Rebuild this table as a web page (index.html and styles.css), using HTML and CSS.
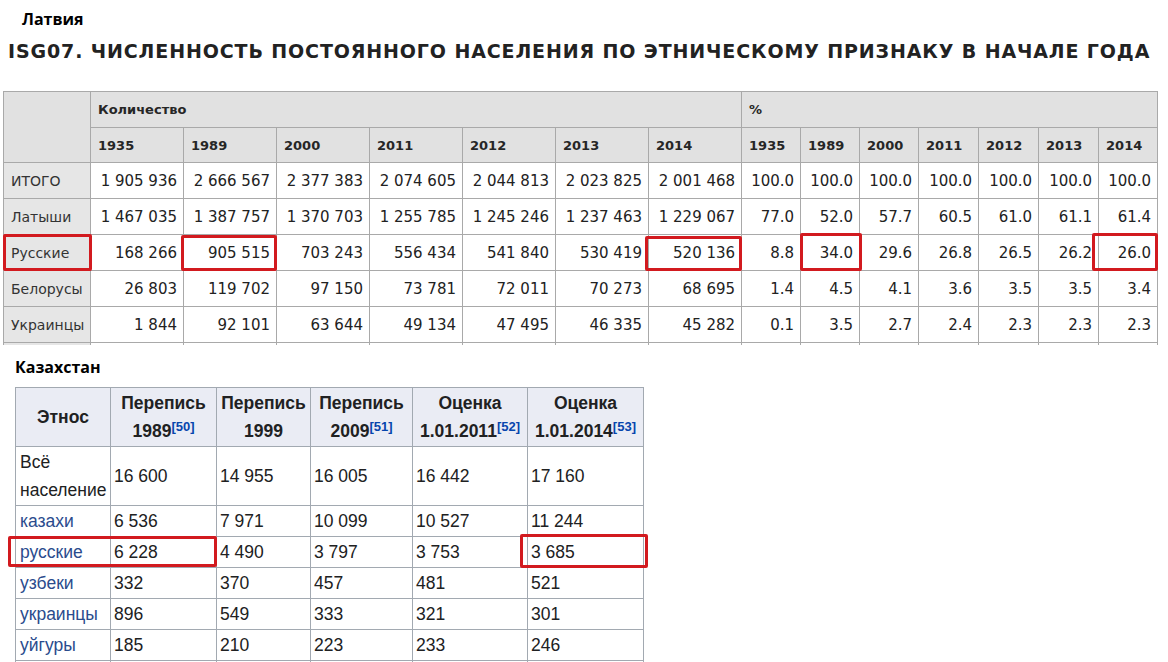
FILE: index.html
```html
<!DOCTYPE html>
<html lang="ru">
<head>
<meta charset="utf-8">
<title>Латвия и Казахстан</title>
<link rel="stylesheet" href="styles.css">
</head>
<body>
<div class="page">
  <p class="label label-lv">Латвия</p>
  <h1 class="title">ISG07. ЧИСЛЕННОСТЬ ПОСТОЯННОГО НАСЕЛЕНИЯ ПО ЭТНИЧЕСКОМУ ПРИЗНАКУ В НАЧАЛЕ ГОДА</h1>
  <div class="lv-wrap">
    <table class="lv">
      <colgroup>
        <col class="c-name">
        <col class="c-num"><col class="c-num"><col class="c-num"><col class="c-num"><col class="c-num"><col class="c-num"><col class="c-num">
        <col class="c-p59"><col class="c-p59"><col class="c-p59"><col class="c-p60"><col class="c-p60"><col class="c-p60"><col class="c-p59">
      </colgroup>
      <thead>
        <tr class="r1">
          <th class="corner" rowspan="2"></th>
          <th class="grp" colspan="7">Количество</th>
          <th class="grp" colspan="7">%</th>
        </tr>
        <tr class="r2">
          <th>1935</th><th>1989</th><th>2000</th><th>2011</th><th>2012</th><th>2013</th><th>2014</th>
          <th>1935</th><th>1989</th><th>2000</th><th>2011</th><th>2012</th><th>2013</th><th>2014</th>
        </tr>
      </thead>
      <tbody>
        <tr><th class="rh">ИТОГО</th><td>1 905 936</td><td>2 666 567</td><td>2 377 383</td><td>2 074 605</td><td>2 044 813</td><td>2 023 825</td><td>2 001 468</td><td>100.0</td><td>100.0</td><td>100.0</td><td>100.0</td><td>100.0</td><td>100.0</td><td>100.0</td></tr>
        <tr><th class="rh">Латыши</th><td>1 467 035</td><td>1 387 757</td><td>1 370 703</td><td>1 255 785</td><td>1 245 246</td><td>1 237 463</td><td>1 229 067</td><td>77.0</td><td>52.0</td><td>57.7</td><td>60.5</td><td>61.0</td><td>61.1</td><td>61.4</td></tr>
        <tr><th class="rh">Русские</th><td>168 266</td><td>905 515</td><td>703 243</td><td>556 434</td><td>541 840</td><td>530 419</td><td>520 136</td><td>8.8</td><td>34.0</td><td>29.6</td><td>26.8</td><td>26.5</td><td>26.2</td><td>26.0</td></tr>
        <tr><th class="rh">Белорусы</th><td>26 803</td><td>119 702</td><td>97 150</td><td>73 781</td><td>72 011</td><td>70 273</td><td>68 695</td><td>1.4</td><td>4.5</td><td>4.1</td><td>3.6</td><td>3.5</td><td>3.5</td><td>3.4</td></tr>
        <tr><th class="rh">Украинцы</th><td>1 844</td><td>92 101</td><td>63 644</td><td>49 134</td><td>47 495</td><td>46 335</td><td>45 282</td><td>0.1</td><td>3.5</td><td>2.7</td><td>2.4</td><td>2.3</td><td>2.3</td><td>2.3</td></tr>
        <tr class="cut"><th class="rh"></th><td></td><td></td><td></td><td></td><td></td><td></td><td></td><td></td><td></td><td></td><td></td><td></td><td></td><td></td></tr>
      </tbody>
    </table>
  </div>

  <p class="label label-kz">Казахстан</p>
  <table class="kz">
    <colgroup>
      <col class="k1"><col class="k2"><col class="k3"><col class="k4"><col class="k5"><col class="k6">
    </colgroup>
    <thead>
      <tr>
        <th>Этнос</th>
        <th>Перепись<br>1989<sup class="ref">[50]</sup></th>
        <th>Перепись<br>1999</th>
        <th>Перепись<br>2009<sup class="ref">[51]</sup></th>
        <th>Оценка<br>1.01.2011<sup class="ref">[52]</sup></th>
        <th>Оценка<br>1.01.2014<sup class="ref">[53]</sup></th>
      </tr>
    </thead>
    <tbody>
      <tr class="two"><td>Всё население</td><td>16 600</td><td>14 955</td><td>16 005</td><td>16 442</td><td>17 160</td></tr>
      <tr><td><a class="lnk" href="#">казахи</a></td><td>6 536</td><td>7 971</td><td>10 099</td><td>10 527</td><td>11 244</td></tr>
      <tr><td><a class="lnk" href="#">русские</a></td><td>6 228</td><td>4 490</td><td>3 797</td><td>3 753</td><td>3 685</td></tr>
      <tr><td><a class="lnk" href="#">узбеки</a></td><td>332</td><td>370</td><td>457</td><td>481</td><td>521</td></tr>
      <tr><td><a class="lnk" href="#">украинцы</a></td><td>896</td><td>549</td><td>333</td><td>321</td><td>301</td></tr>
      <tr><td><a class="lnk" href="#">уйгуры</a></td><td>185</td><td>210</td><td>223</td><td>233</td><td>246</td></tr>
      <tr class="cut"><td></td><td></td><td></td><td></td><td></td><td></td></tr>
    </tbody>
  </table>

  <div class="mark m1"></div>
  <div class="mark m2"></div>
  <div class="mark m3"></div>
  <div class="mark m4"></div>
  <div class="mark m5"></div>
  <div class="mark m6"></div>
  <div class="mark m7"></div>
</div>
</body>
</html>
```

FILE: styles.css
```css
html, body {
  margin: 0;
  padding: 0;
  background: #ffffff;
}
body {
  height: 662px;
  overflow: hidden;
}
.page {
  position: relative;
  width: 1168px;
  height: 662px;
  overflow: hidden;
}

.label {
  margin: 0;
  font-family: "Open Sans", "DejaVu Sans", sans-serif;
  font-weight: 700;
  font-size: 16px;
  line-height: 20px;
  color: #000;
}
.label-lv {
  padding: 9px 0 0 22px;
}
.label-kz {
  margin-top: 12px;
  padding-left: 15px;
}

.title {
  margin: 10px 0 0 8px;
  font-family: "DejaVu Sans", Verdana, sans-serif;
  font-weight: 700;
  font-size: 19px;
  letter-spacing: 0.88px;
  line-height: 24px;
  color: #222;
  white-space: nowrap;
}

/* ---------- Latvia table ---------- */
.lv-wrap {
  margin: 28px 0 0 3px;
  height: 254px;
  overflow: hidden;
}
.lv {
  border-collapse: collapse;
  table-layout: fixed;
  width: 1155px;
  font-family: "DejaVu Sans", Verdana, sans-serif;
  color: #222;
}
.c-name { width: 87px; }
.c-num { width: 93px; }
.c-p59 { width: 59px; }
.c-p60 { width: 60px; }

.lv th, .lv td {
  border: 1px solid #a9a9a9;
  padding: 0 7px;
  white-space: nowrap;
  overflow: hidden;
}
.lv thead th {
  background: #e1e1e1;
  font-size: 13px;
  font-weight: 700;
  text-align: left;
  color: #262626;
}
.lv .r1 { height: 36px; }
.lv .r2 { height: 35px; }
.lv tbody tr { height: 36px; }
.lv .rh {
  background: #e6e6e6;
  font-size: 14px;
  font-weight: 400;
  text-align: left;
  color: #333;
}
.lv td {
  background: #fff;
  font-size: 15px;
  text-align: right;
  padding-right: 6px;
  padding-left: 2px;
}

/* ---------- Kazakhstan table ---------- */
.kz {
  margin: 10px 0 0 15px;
  border-collapse: collapse;
  table-layout: fixed;
  width: 629px;
  font-family: "Liberation Sans", Arial, sans-serif;
  font-size: 17.5px;
  color: #202122;
}
.k1 { width: 95px; }
.k2 { width: 106px; }
.k3 { width: 94px; }
.k4 { width: 102px; }
.k5 { width: 115px; }
.k6 { width: 116px; }

.kz th, .kz td {
  border: 1px solid #a2a9b1;
  line-height: 28px;
  padding: 0 3px;
  vertical-align: middle;
}
.kz th {
  background: #eaecf4;
  font-weight: 700;
  text-align: center;
  height: 58px;
  padding: 0 1px;
  white-space: nowrap;
}
.kz td {
  height: 30px;
  text-align: left;
  background: #fff;
  white-space: nowrap;
}
.kz .two td { height: 58px; }
.kz td:first-child {
  padding: 0 1px 0 4px;
  white-space: normal;
}

.ref {
  font-size: 13px;
  line-height: 1;
  vertical-align: 6px;
  color: #0645ad;
  font-weight: 700;
}
.lnk {
  color: #2a4b8d;
  text-decoration: none;
}

/* ---------- red highlight frames ---------- */
.mark {
  position: absolute;
  box-sizing: border-box;
  border: 3px solid #d21a1f;
  border-radius: 2px;
}
.m1 { left: 3px; top: 234px; width: 89px; height: 37px; }
.m2 { left: 181px; top: 235px; width: 96px; height: 36px; }
.m3 { left: 645px; top: 236px; width: 97px; height: 35px; }
.m4 { left: 800px; top: 233px; width: 62px; height: 38px; }
.m5 { left: 1092px; top: 233px; width: 66px; height: 38px; }
.m6 { left: 8px; top: 536px; width: 209px; height: 31px; }
.m7 { left: 520px; top: 534px; width: 128px; height: 34px; }
```
